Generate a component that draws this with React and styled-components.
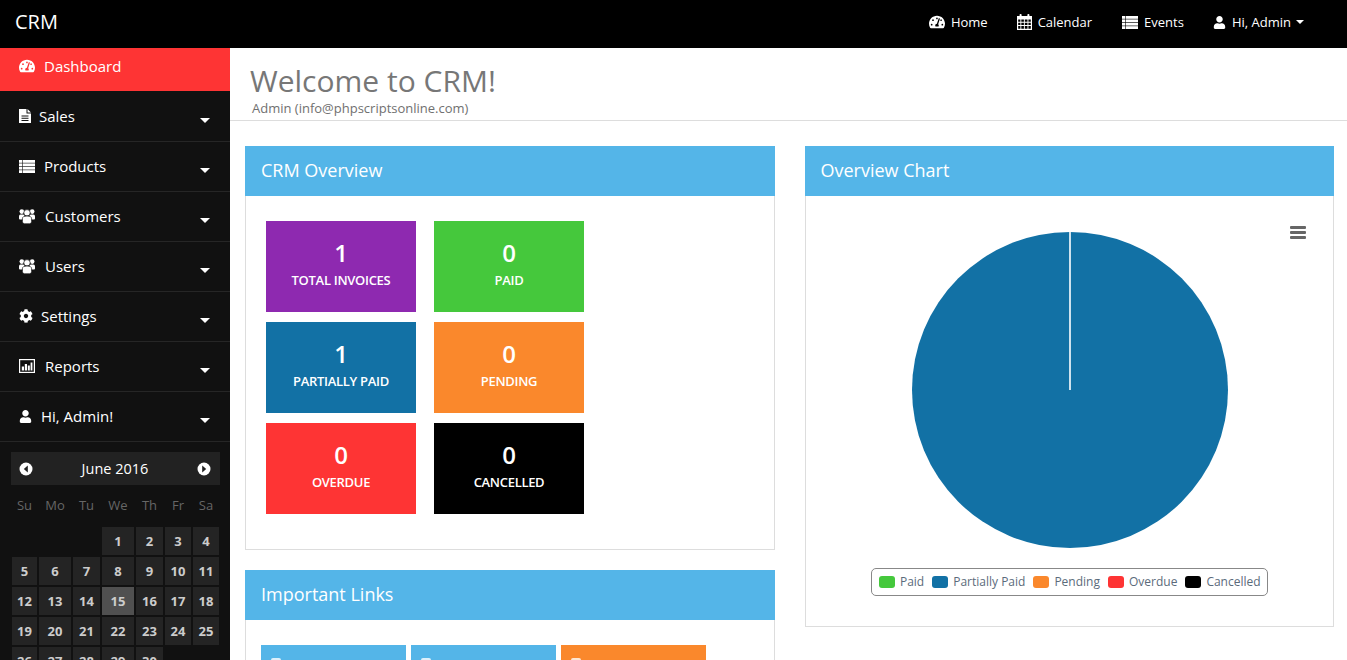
import React from "react";
import styled, { createGlobalStyle } from "styled-components";
import { FaTachometerAlt, FaCog, FaUser } from "react-icons/fa";

const GlobalStyle = createGlobalStyle`
  html, body {
    margin: 0;
    height: 100%;
    overflow: hidden;
    background: #fff;
    font-family: "Open Sans", "Liberation Sans", sans-serif;
  }
`;

function FileIcon() {
  return (
    <svg width="12" height="14" viewBox="0 0 12 14">
      <path
        fillRule="evenodd"
        fill="#fff"
        d="M0 0 H7.5 V4.5 H12 V14 H0 Z M2.5 6.5 V7.5 H9.5 V6.5 Z M2.5 8.8 V9.8 H9.5 V8.8 Z M2.5 11 V12 H9.5 V11 Z"
      />
      <path fill="#fff" d="M8.5 0 L12 3.5 H8.5 Z" />
    </svg>
  );
}

function ListIcon() {
  return (
    <svg width="16" height="13" viewBox="0 0 16 13">
      {[0, 3.4, 6.8, 10.2].map((y) => (
        <g key={y} fill="#fff">
          <rect x="0" y={y} width="3.4" height="2.8" />
          <rect x="4" y={y} width="12" height="2.8" />
        </g>
      ))}
    </svg>
  );
}

function UsersIcon() {
  return (
    <svg width="16" height="16" viewBox="0 0 16 16">
      <circle cx="2.8" cy="3.6" r="2.3" fill="#fff" />
      <circle cx="13.2" cy="3.6" r="2.3" fill="#fff" />
      <path fill="#fff" d="M0 8.2 C0 6.8 1 6.4 2.8 6.4 S5.6 6.8 5.6 8.2 V11.5 H1 Q0 11.5 0 10.5 Z" />
      <path fill="#fff" d="M16 8.2 C16 6.8 15 6.4 13.2 6.4 S10.4 6.8 10.4 8.2 V11.5 H15 Q16 11.5 16 10.5 Z" />
      <circle cx="8" cy="4.8" r="3.2" fill="#fff" stroke="#111" strokeWidth="0.7" />
      <path
        fill="#fff"
        stroke="#111"
        strokeWidth="0.7"
        d="M3.4 10.8 C3.4 8.8 5 8 8 8 S12.6 8.8 12.6 10.8 V13.6 Q12.6 15.8 10.5 15.8 H5.5 Q3.4 15.8 3.4 13.6 Z"
      />
    </svg>
  );
}

function CalendarIcon() {
  return (
    <svg width="15" height="16" viewBox="0 0 15 16">
      <rect x="2.6" y="0" width="2" height="3.4" rx="0.8" fill="#fff" />
      <rect x="10.4" y="0" width="2" height="3.4" rx="0.8" fill="#fff" />
      <path
        fillRule="evenodd"
        fill="#fff"
        d="M0 2 H15 V16 H0 Z M1.2 5.4 V7.8 H3.4 V5.4 Z M4.3 5.4 V7.8 H6.9 V5.4 Z M7.8 5.4 V7.8 H10.5 V5.4 Z M11.4 5.4 V7.8 H13.8 V5.4 Z M1.2 8.7 V11 H3.4 V8.7 Z M4.3 8.7 V11 H6.9 V8.7 Z M7.8 8.7 V11 H10.5 V8.7 Z M11.4 8.7 V11 H13.8 V8.7 Z M1.2 11.9 V14.8 H3.4 V11.9 Z M4.3 11.9 V14.8 H6.9 V11.9 Z M7.8 11.9 V14.8 H10.5 V11.9 Z M11.4 11.9 V14.8 H13.8 V11.9 Z"
      />
    </svg>
  );
}

function ReportIcon() {
  return (
    <svg width="16" height="14" viewBox="0 0 16 14">
      <rect x="0.6" y="0.6" width="14.8" height="12.8" fill="none" stroke="#fff" strokeWidth="1.2" />
      <rect x="2.8" y="7.5" width="2.2" height="4" fill="#fff" />
      <rect x="5.8" y="5" width="2.2" height="6.5" fill="#fff" />
      <rect x="8.8" y="6.5" width="2" height="5" fill="#fff" />
      <rect x="11.6" y="3.5" width="1.8" height="8" fill="#fff" />
    </svg>
  );
}

function CircleArrow({ left }) {
  return (
    <svg width="14" height="14" viewBox="0 0 14 14">
      <circle cx="7" cy="7" r="6.5" fill="#fff" />
      <path d={left ? "M8.8 3.6 L4.8 7 L8.8 10.4 Z" : "M5.2 3.6 L9.2 7 L5.2 10.4 Z"} fill="#222" />
    </svg>
  );
}

const menu = [
  { label: "Sales", icon: <FileIcon />, gap: 8 },
  { label: "Products", icon: <ListIcon />, gap: 9 },
  { label: "Customers", icon: <UsersIcon />, gap: 10 },
  { label: "Users", icon: <UsersIcon />, gap: 10 },
  { label: "Settings", icon: <FaCog size={14} />, gap: 8 },
  { label: "Reports", icon: <ReportIcon />, gap: 10 },
  { label: "Hi, Admin!", icon: <FaUser size={13} />, gap: 9 },
];

const stats = [
  { value: 1, label: "Total Invoices", color: "#8e29b0" },
  { value: 0, label: "Paid", color: "#45c83c" },
  { value: 1, label: "Partially Paid", color: "#1271a5" },
  { value: 0, label: "Pending", color: "#fa882c" },
  { value: 0, label: "Overdue", color: "#fe3434" },
  { value: 0, label: "Cancelled", color: "#000" },
];

const legend = [
  { label: "Paid", color: "#45c83c" },
  { label: "Partially Paid", color: "#1271a5" },
  { label: "Pending", color: "#fa882c" },
  { label: "Overdue", color: "#fe3434" },
  { label: "Cancelled", color: "#000" },
];

const links = [
  { color: "#54b5e8" },
  { color: "#54b5e8" },
  { color: "#fa882c" },
];

const weekDays = ["Su", "Mo", "Tu", "We", "Th", "Fr", "Sa"];
const days = [];
for (let i = 0; i < 3; i++) days.push(null);
for (let i = 1; i <= 30; i++) days.push(i);

export default function App() {
  return (
    <>
      <GlobalStyle />
      <Page>
        <TopBar>
          <Brand>CRM</Brand>
          <TopNav>
            <TopLink><FaTachometerAlt size={16} />Home</TopLink>
            <TopLink><CalendarIcon />Calendar</TopLink>
            <TopLink><ListIcon />Events</TopLink>
            <TopLink>
              <FaUser size={13} />Hi, Admin<TopCaret />
            </TopLink>
          </TopNav>
        </TopBar>
        <Body>
          <Sidebar>
            <ActiveItem><FaTachometerAlt size={16} />Dashboard</ActiveItem>
            {menu.map((item) => (
              <MenuItem key={item.label} $gap={item.gap}>
                {item.icon}
                {item.label}
                <MenuCaret />
              </MenuItem>
            ))}
            <Calendar>
              <CalHeader>
                <CircleArrow left />
                <span>June 2016</span>
                <CircleArrow />
              </CalHeader>
              <CalGrid>
                {weekDays.map((d) => (
                  <WeekDay key={d}>{d}</WeekDay>
                ))}
                {days.map((d, i) =>
                  d ? (
                    <Day key={i} $today={d === 15}>{d}</Day>
                  ) : (
                    <span key={i} />
                  )
                )}
              </CalGrid>
            </Calendar>
          </Sidebar>
          <Main>
            <PageHead>
              <Title>Welcome to CRM!</Title>
              <Subtitle>Admin (info@phpscriptsonline.com)</Subtitle>
            </PageHead>
            <Columns>
              <Column>
                <Panel>
                  <PanelTitle>CRM Overview</PanelTitle>
                  <OverviewBody>
                    <StatGrid>
                      {stats.map((s) => (
                        <Stat key={s.label} $color={s.color}>
                          <StatValue>{s.value}</StatValue>
                          <StatLabel>{s.label}</StatLabel>
                        </Stat>
                      ))}
                    </StatGrid>
                  </OverviewBody>
                </Panel>
                <Panel>
                  <PanelTitle>Important Links</PanelTitle>
                  <LinksBody>
                    {links.map((l, i) => (
                      <LinkTile key={i} $color={l.color}>
                        <LinkMark />
                      </LinkTile>
                    ))}
                  </LinksBody>
                </Panel>
              </Column>
              <Column>
                <Panel>
                  <PanelTitle>Overview Chart</PanelTitle>
                  <ChartBody>
                    <ChartMenu>
                      <span /><span /><span />
                    </ChartMenu>
                    <PieChart width="318" height="318" viewBox="0 0 318 318">
                      <circle cx="159" cy="159" r="158" fill="#1271a5" />
                      <line x1="159" y1="0" x2="159" y2="159" stroke="#fff" strokeWidth="1.6" />
                    </PieChart>
                    <Legend>
                      {legend.map((l) => (
                        <LegendItem key={l.label}>
                          <Swatch $color={l.color} />
                          {l.label}
                        </LegendItem>
                      ))}
                    </Legend>
                  </ChartBody>
                </Panel>
              </Column>
            </Columns>
          </Main>
        </Body>
      </Page>
    </>
  );
}

const Page = styled.div`
  height: 100vh;
  overflow: hidden;
  display: flex;
  flex-direction: column;
`;

const TopBar = styled.header`
  flex: none;
  height: 48px;
  box-sizing: border-box;
  background: #000;
  color: #fff;
  display: flex;
  align-items: center;
  justify-content: space-between;
  padding: 0 43px 4px 15px;
`;

const Brand = styled.div`
  font-size: 20px;
  line-height: 44px;
`;

const TopNav = styled.nav`
  display: flex;
  gap: 30px;
`;

const TopLink = styled.a`
  display: flex;
  align-items: center;
  gap: 6px;
  font-size: 13px;
  color: #fff;

  &:first-child {
    margin-right: -1px;
  }

  &:last-child {
    margin-left: -1px;
  }
`;

const TopCaret = styled.i`
  width: 0;
  height: 0;
  margin-left: -1px;
  border-left: 4px solid transparent;
  border-right: 4px solid transparent;
  border-top: 4px solid #fff;
`;

const Body = styled.div`
  flex: 1;
  display: flex;
  min-height: 0;
`;

const Sidebar = styled.aside`
  flex: none;
  width: 230px;
  background: #111;
  color: #fff;
`;

const ActiveItem = styled.div`
  height: 43px;
  display: flex;
  align-items: center;
  gap: 9px;
  padding: 0 0 8px 19px;
  box-sizing: border-box;
  margin-bottom: 1px;
  background: #fe3434;
  font-size: 15px;
`;

const MenuItem = styled.div`
  position: relative;
  height: 50px;
  box-sizing: border-box;
  display: flex;
  align-items: center;
  gap: ${(p) => p.$gap}px;
  padding: 0 0 1px 19px;
  border-bottom: 1px solid #262626;
  font-size: 15px;
`;

const MenuCaret = styled.i`
  position: absolute;
  right: 20px;
  top: 26px;
  width: 0;
  height: 0;
  border-left: 5px solid transparent;
  border-right: 5px solid transparent;
  border-top: 5px solid #fff;
`;

const Calendar = styled.div`
  padding: 10px 10px 0 11px;
`;

const CalHeader = styled.div`
  height: 33px;
  background: #222;
  display: flex;
  align-items: center;
  justify-content: space-between;
  padding: 0 9px 0 8px;
  font-size: 14.5px;
`;

const CalGrid = styled.div`
  display: grid;
  grid-template-columns: 25px 32px 27px 32px 27px 26px 26px;
  grid-template-rows: 36px;
  grid-auto-rows: 28px;
  gap: 2px;
  margin: 4px 0 0 1px;
`;

const WeekDay = styled.div`
  display: flex;
  align-items: center;
  justify-content: center;
  padding-bottom: 4px;
  box-sizing: border-box;
  font-size: 13px;
  color: #666;
`;

const Day = styled.div`
  display: flex;
  align-items: center;
  justify-content: center;
  font-size: 13px;
  font-weight: 700;
  color: #ccc;
  background: ${(p) => (p.$today ? "#505050" : "#242424")};
`;

const Main = styled.main`
  flex: 1;
  min-width: 0;
`;

const PageHead = styled.div`
  height: 73px;
  box-sizing: border-box;
  padding: 14px 0 0 20px;
  border-bottom: 1px solid #ddd;
`;

const Title = styled.h1`
  margin: 0;
  font-size: 30px;
  font-weight: 400;
  line-height: 38px;
  color: #777;
`;

const Subtitle = styled.div`
  margin: -1px 0 0 2px;
  font-size: 13px;
  line-height: 18px;
  color: #707070;
`;

const Columns = styled.div`
  display: flex;
  gap: 30px;
  padding: 25px 13px 0 15px;
`;

const Column = styled.div`
  flex: 1;
  min-width: 0;
  display: flex;
  flex-direction: column;
  gap: 20px;
`;

const Panel = styled.section`
  display: flex;
  flex-direction: column;
`;

const PanelTitle = styled.div`
  height: 50px;
  display: flex;
  align-items: center;
  padding: 0 0 2px 16px;
  box-sizing: border-box;
  background: #54b5e8;
  color: #fff;
  font-size: 18px;
  font-weight: 500;
`;

const OverviewBody = styled.div`
  height: 354px;
  box-sizing: border-box;
  padding: 25px 20px;
  border: 1px solid #ddd;
  border-top: 0;
`;

const StatGrid = styled.div`
  display: grid;
  grid-template-columns: 150px 150px;
  grid-auto-rows: 91px;
  column-gap: 18px;
  row-gap: 10px;
`;

const Stat = styled.div`
  background: ${(p) => p.$color};
  color: #fff;
  display: flex;
  flex-direction: column;
  align-items: center;
  padding-top: 14px;
  box-sizing: border-box;
`;

const StatValue = styled.div`
  font-size: 24px;
  font-weight: 600;
  line-height: 36px;
`;

const StatLabel = styled.div`
  font-size: 13px;
  font-weight: 600;
  line-height: 18px;
  text-transform: uppercase;
  letter-spacing: -0.3px;
`;

const LinksBody = styled.div`
  display: flex;
  gap: 5px;
  padding: 25px 15px;
  border: 1px solid #ddd;
  border-top: 0;
`;

const LinkTile = styled.div`
  width: 145px;
  height: 91px;
  padding: 13px 0 0 10px;
  box-sizing: border-box;
  background: ${(p) => p.$color};
`;

const LinkMark = styled.div`
  width: 10px;
  height: 14px;
  border-radius: 2px;
  background: rgba(255, 255, 255, 0.8);
`;

const ChartBody = styled.div`
  position: relative;
  height: 431px;
  box-sizing: border-box;
  padding-top: 35px;
  border: 1px solid #ddd;
  border-top: 0;
  display: flex;
  flex-direction: column;
  align-items: center;
`;

const PieChart = styled.svg`
  margin-left: 1px;
`;

const ChartMenu = styled.div`
  position: absolute;
  top: 30px;
  right: 27px;
  width: 16px;
  display: flex;
  flex-direction: column;
  gap: 2px;

  span {
    height: 3px;
    border-radius: 1px;
    background: #666;
  }
`;

const Legend = styled.div`
  margin-top: 19px;
  height: 28px;
  box-sizing: border-box;
  display: flex;
  align-items: center;
  gap: 8px;
  padding: 0 6px 1px 7px;
  border: 1px solid #888;
  border-radius: 5px;
`;

const LegendItem = styled.div`
  display: flex;
  align-items: center;
  gap: 5px;
  font-size: 12px;
  color: #5b6b7b;
`;

const Swatch = styled.i`
  width: 16px;
  height: 12px;
  border-radius: 3px;
  background: ${(p) => p.$color};
`;
